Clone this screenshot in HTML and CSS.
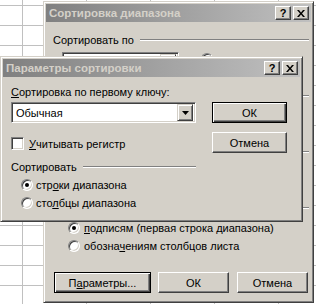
FILE: index.html
```html
<!DOCTYPE html>
<html lang="ru">
<head>
    <meta charset="UTF-8">
    <meta name="viewport" content="width=device-width, initial-scale=1.0">
    <title>Параметры сортировки</title>
    <link rel="stylesheet" href="styles.css">
</head>
<body>
    <div class="desktop">
        <!-- back dialog -->
        <div class="window back-win">
            <div class="titlebar">
                <span class="title">Сортировка диапазона</span>
                <div class="cap-btns">
                    <span class="cap-btn">?</span>
                    <span class="cap-btn"><svg width="8" height="7" viewBox="0 0 8 7"><path d="M0 0h2l2 2.5 2-2.5h2l-3 3.5 3 3.5h-2l-2-2.5-2 2.5h-2l3-3.5z" fill="#000"/></svg></span>
                </div>
            </div>
            <div class="back-body">
                <div class="group">
                    <div class="group-head"><span>Сортировать по</span><span class="etch"></span></div>
                    <div class="key-row">
                        <div class="combo key-combo"><span class="combo-text"></span><span class="drop"><svg width="7" height="4" viewBox="0 0 7 4"><path d="M0 0h7l-3.5 4z" fill="#000"/></svg></span></div>
                        <div class="order">
                            <div class="opt"><span class="radio on"></span><span>по <u>в</u>озрастанию</span></div>
                            <div class="opt"><span class="radio"></span><span>по у<u>б</u>ыванию</span></div>
                        </div>
                    </div>
                </div>
                <div class="group">
                    <div class="group-head"><span>Затем по</span><span class="etch"></span></div>
                    <div class="key-row">
                        <div class="combo key-combo"><span class="combo-text"></span><span class="drop"><svg width="7" height="4" viewBox="0 0 7 4"><path d="M0 0h7l-3.5 4z" fill="#000"/></svg></span></div>
                        <div class="order">
                            <div class="opt"><span class="radio on"></span><span>по возрастанию</span></div>
                            <div class="opt"><span class="radio"></span><span>по убыванию</span></div>
                        </div>
                    </div>
                </div>
                <div class="group">
                    <div class="group-head"><span>В последнюю очередь, по</span><span class="etch"></span></div>
                    <div class="key-row">
                        <div class="combo key-combo"><span class="combo-text"></span><span class="drop"><svg width="7" height="4" viewBox="0 0 7 4"><path d="M0 0h7l-3.5 4z" fill="#000"/></svg></span></div>
                        <div class="order">
                            <div class="opt"><span class="radio on"></span><span>по возрастанию</span></div>
                            <div class="opt"><span class="radio"></span><span>по убыванию</span></div>
                        </div>
                    </div>
                </div>
                <div class="group">
                    <div class="group-head"><span>Идентифицировать поля по</span><span class="etch"></span></div>
                    <div class="id-opts">
                        <div class="opt wide"><span class="radio on"></span><span><u>п</u>одписям (первая строка диапазона)</span></div>
                        <div class="opt wide"><span class="radio"></span><span>обозна<u>ч</u>ениям столбцов листа</span></div>
                    </div>
                </div>
                <div class="btn-row">
                    <span class="btn default params-btn">П<u>а</u>раметры...</span>
                    <span class="btn ok-btn">ОК</span>
                    <span class="btn cancel-btn">Отмена</span>
                </div>
            </div>
        </div>

        <!-- front dialog -->
        <div class="window front-win">
            <div class="titlebar">
                <span class="title">Параметры сортировки</span>
                <div class="cap-btns">
                    <span class="cap-btn">?</span>
                    <span class="cap-btn"><svg width="8" height="7" viewBox="0 0 8 7"><path d="M0 0h2l2 2.5 2-2.5h2l-3 3.5 3 3.5h-2l-2-2.5-2 2.5h-2l3-3.5z" fill="#000"/></svg></span>
                </div>
            </div>
            <div class="front-body">
                <div class="front-left">
                    <div class="field-label"><u>С</u>ортировка по первому ключу:</div>
                    <div class="combo first-key"><span class="combo-text">Обычная</span><span class="drop"><svg width="7" height="4" viewBox="0 0 7 4"><path d="M0 0h7l-3.5 4z" fill="#000"/></svg></span></div>
                    <div class="check-row"><span class="checkbox"></span><span><u>У</u>читывать регистр</span></div>
                    <div class="group-head sort-head"><span>Сортировать</span><span class="etch"></span></div>
                    <div class="sort-opts">
                        <div class="opt"><span class="radio on"></span><span>стр<u>о</u>ки диапазона</span></div>
                        <div class="opt"><span class="radio"></span><span>сто<u>л</u>бцы диапазона</span></div>
                    </div>
                </div>
                <div class="front-right">
                    <span class="btn default">ОК</span>
                    <span class="btn">Отмена</span>
                </div>
            </div>
        </div>
    </div>
</body>
</html>
```

FILE: styles.css
```css
body {
    margin: 0;
    font-family: "Liberation Sans", Arial, sans-serif;
    font-size: 11px;
    color: #000;
}
u {
    text-decoration: underline;
    text-underline-offset: 1px;
}
.desktop {
    position: relative;
    width: 316px;
    height: 304px;
    overflow: hidden;
    background-color: #fff;
    background-image:
        linear-gradient(#c0c0c0 1px, transparent 1px),
        linear-gradient(90deg, #c0c0c0 1px, transparent 1px);
    background-size: 64px 20px;
    background-position: 22px 5px;
}

/* classic windows frame */
.window {
    position: absolute;
    box-sizing: border-box;
    display: flex;
    flex-direction: column;
    background-color: #d4d0c8;
    border: 1px solid;
    border-color: #d4d0c8 #404040 #404040 #d4d0c8;
    box-shadow: inset 1px 1px #fff, inset -1px -1px #808080;
    padding: 2px;
}
.back-win {
    left: 43px;
    top: 1px;
    width: 271px;
    height: 302px;
}
.front-win {
    left: 0;
    top: 56px;
    width: 303px;
    height: 166px;
    z-index: 2;
}
.titlebar {
    height: 18px;
    flex-shrink: 0;
    display: flex;
    align-items: center;
    padding: 0 2px 0 3px;
    background: linear-gradient(90deg, #808080, #c0c0c0);
    color: #d4d0c8;
    font-weight: bold;
    font-size: 11.5px;
}
.title {
    flex: 1;
    white-space: nowrap;
}
.cap-btns {
    display: flex;
    gap: 2px;
}
.cap-btn {
    box-sizing: border-box;
    width: 16px;
    height: 14px;
    display: flex;
    align-items: center;
    justify-content: center;
    background-color: #d4d0c8;
    border: 1px solid;
    border-color: #fff #404040 #404040 #fff;
    box-shadow: inset -1px -1px #808080;
    color: #000;
    font-size: 11px;
    font-weight: bold;
    line-height: 1;
}

/* controls */
.btn {
    box-sizing: border-box;
    display: flex;
    align-items: center;
    justify-content: center;
    height: 21px;
    background-color: #d4d0c8;
    border: 1px solid;
    border-color: #fff #404040 #404040 #fff;
    box-shadow: inset -1px -1px #808080;
}
.btn.default {
    border: 1px solid #000;
    box-shadow: inset 1px 1px #fff, inset -1px -1px #404040, inset -2px -2px #808080;
}
.combo {
    box-sizing: border-box;
    height: 21px;
    display: flex;
    align-items: center;
    padding: 2px;
    background-color: #fff;
    border: 1px solid;
    border-color: #808080 #fff #fff #808080;
    box-shadow: inset 1px 1px #404040, inset -1px -1px #d4d0c8;
}
.combo-text {
    flex: 1;
    padding-left: 2px;
}
.drop {
    box-sizing: border-box;
    width: 16px;
    height: 17px;
    display: flex;
    align-items: center;
    justify-content: center;
    background-color: #d4d0c8;
    border: 1px solid;
    border-color: #d4d0c8 #404040 #404040 #d4d0c8;
    box-shadow: inset 1px 1px #fff, inset -1px -1px #808080;
}
.radio {
    box-sizing: border-box;
    position: relative;
    width: 12px;
    height: 12px;
    flex-shrink: 0;
    border-radius: 50%;
    background-color: #fff;
    border: 1px solid;
    border-color: #808080 #fff #fff #808080;
    box-shadow: inset 1px 1px #404040, inset -1px -1px #d4d0c8;
}
.radio.on::after {
    content: "";
    position: absolute;
    left: 3px;
    top: 3px;
    width: 4px;
    height: 4px;
    border-radius: 50%;
    background-color: #000;
}
.checkbox {
    box-sizing: border-box;
    width: 13px;
    height: 13px;
    flex-shrink: 0;
    background-color: #fff;
    border: 1px solid;
    border-color: #808080 #fff #fff #808080;
    box-shadow: inset 1px 1px #404040, inset -1px -1px #d4d0c8;
}
.opt {
    display: flex;
    align-items: center;
    gap: 3px;
    height: 13px;
    white-space: nowrap;
}
.opt.wide {
    gap: 4px;
}
.group-head {
    display: flex;
    align-items: center;
    gap: 6px;
    height: 13px;
    white-space: nowrap;
}
.etch {
    flex: 1;
    height: 0;
    border-top: 1px solid #808080;
    border-bottom: 1px solid #fff;
}

/* back dialog */
.back-body {
    padding: 11px 2px 0 7px;
}
.group + .group {
    margin-top: 16px;
}
.key-row {
    display: flex;
    align-items: flex-start;
    height: 21px;
    margin-top: 6px;
}
.key-combo {
    width: 117px;
    margin-left: 9px;
}
.order {
    display: flex;
    flex-direction: column;
    gap: 5px;
    margin-left: 22px;
}
.id-opts {
    display: flex;
    flex-direction: column;
    gap: 5px;
    margin-top: 7px;
    margin-left: 15px;
}
.btn-row {
    display: flex;
    margin-top: 20px;
}
.params-btn {
    width: 97px;
    margin-left: 1px;
}
.ok-btn {
    width: 71px;
    margin-left: 7px;
}
.cancel-btn {
    width: 71px;
    margin-left: 8px;
}

/* front dialog */
.front-body {
    display: flex;
    gap: 16px;
    padding: 9px 0 0 8px;
}
.front-left {
    width: 185px;
}
.field-label {
    height: 13px;
    line-height: 13px;
}
.first-key {
    margin-top: 3px;
}
.check-row {
    display: flex;
    align-items: center;
    gap: 5px;
    height: 13px;
    margin-top: 14px;
}
.sort-head {
    margin-top: 10px;
}
.sort-opts {
    display: flex;
    flex-direction: column;
    gap: 5px;
    margin-top: 5px;
    margin-left: 10px;
}
.front-right {
    display: flex;
    flex-direction: column;
    gap: 9px;
    width: 75px;
    padding-top: 16px;
}
```
